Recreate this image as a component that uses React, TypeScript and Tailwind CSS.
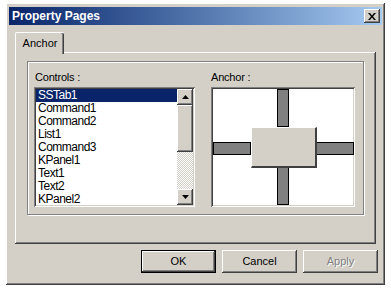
import React from "react";

const raised =
  "shadow-[inset_-1px_-1px_#404040,inset_1px_1px_#ffffff,inset_-2px_-2px_#808080,inset_2px_2px_#d4d0c8]";
const sunken =
  "shadow-[inset_1px_1px_#808080,inset_-1px_-1px_#ffffff,inset_2px_2px_#404040,inset_-2px_-2px_#d4d0c8]";

const items = ["SSTab1", "Command1", "Command2", "List1", "Command3", "KPanel1", "Text1", "Text2", "KPanel2"];

function Btn({ label, def, disabled }: { label: string; def?: boolean; disabled?: boolean }) {
  return (
    <div
      className={`flex h-[23px] w-[75px] items-center justify-center bg-[#d4d0c8] ${
        def
          ? "border border-black shadow-[inset_-1px_-1px_#404040,inset_1px_1px_#ffffff,inset_-2px_-2px_#808080]"
          : raised
      }`}
    >
      <span
        className={
          disabled ? "text-[#808080] [text-shadow:1px_1px_#ffffff]" : "text-black"
        }
      >
        {label}
      </span>
    </div>
  );
}

function ArrowBtn({ up }: { up?: boolean }) {
  return (
    <div className={`flex h-[16px] w-[16px] items-center justify-center bg-[#d4d0c8] ${raised}`}>
      <svg width="7" height="4" viewBox="0 0 7 4">
        <path d={up ? "M3.5 0 L7 4 L0 4 Z" : "M0 0 L7 0 L3.5 4 Z"} fill="#000" />
      </svg>
    </div>
  );
}

export default function App() {
  return (
    <div
      className="h-[289px] w-[391px] bg-white pl-[6px] pt-[3px] text-[11px] leading-[13px] text-black"
      style={{ fontFamily: '"Liberation Sans", Arial, sans-serif' }}
    >
      <div className={`flex h-[282px] w-[379px] flex-col bg-[#d4d0c8] px-[3px] pb-[3px] pt-[4px] ${raised}`}>
        {/* title bar */}
        <div className="flex h-[18px] items-center justify-between bg-gradient-to-r from-[#0a246a] to-[#a6caf0] pl-[3px] pr-[2px]">
          <span className="text-[12px] font-bold text-white">Property Pages</span>
          <div className={`flex h-[14px] w-[16px] items-center justify-center bg-[#d4d0c8] ${raised}`}>
            <svg width="8" height="7" viewBox="0 0 8 7">
              <path d="M0 0 L2 0 L4 2.5 L6 0 L8 0 L5 3.5 L8 7 L6 7 L4 4.5 L2 7 L0 7 L3 3.5 Z" fill="#000" />
            </svg>
          </div>
        </div>

        {/* tab strip */}
        <div className="mt-[7px] flex pl-[6px]">
          <div className="relative z-10 -mb-[2px] flex h-[22px] w-[49px] items-start justify-center rounded-t-[2px] border-l border-t border-white bg-[#d4d0c8] pt-[4px] shadow-[inset_-1px_0_#404040,inset_-2px_0_#808080]">
            Anchor
          </div>
        </div>

        {/* tab panel */}
        <div className={`ml-[6px] flex h-[192px] w-[361px] flex-col px-[12px] pt-[9px] ${raised}`}>
          <div className="h-[154px] border border-[#808080] shadow-[inset_1px_1px_#ffffff,1px_1px_#ffffff]">
            <div className="flex gap-[16px] pl-[6px] pt-[9px]">
              <div className="flex flex-col">
                <span className="pl-[1px] tracking-[-0.2px]">Controls :</span>
                <div className={`mt-[3px] flex h-[120px] w-[161px] bg-white p-[2px] ${sunken}`}>
                  <div className="flex flex-1 flex-col text-[12px] leading-[13px] tracking-[-0.5px]">
                    {items.map((it, i) => (
                      <div
                        key={it}
                        className={`h-[13px] pl-[2px] ${i === 0 ? "bg-[#0a246a] text-white" : ""}`}
                      >
                        {it}
                      </div>
                    ))}
                  </div>
                  <div className="flex w-[16px] flex-col">
                    <ArrowBtn up />
                    <div className={`h-[47px] w-[16px] bg-[#d4d0c8] ${raised}`} />
                    <div className="flex-1 bg-[#ebe9e6] [background-image:repeating-conic-gradient(#ffffff_0_25%,#d4d0c8_0_50%)] [background-size:2px_2px]" />
                    <ArrowBtn />
                  </div>
                </div>
              </div>
              <div className="flex flex-col">
                <span className="tracking-[-0.2px]">Anchor :</span>
                <div className={`mt-[3px] h-[120px] w-[144px] bg-white ${sunken}`}>
                  <div className="relative h-full w-full">
                    <div className="absolute left-[66px] top-[2px] h-[38px] w-[12px] border border-black bg-[#808080]" />
                    <div className="absolute bottom-[2px] left-[66px] h-[38px] w-[12px] border border-black bg-[#808080]" />
                    <div className="absolute left-[2px] top-[55px] h-[13px] w-[38px] border border-black bg-[#808080]" />
                    <div className="absolute right-[1px] top-[55px] h-[13px] w-[38px] border border-black bg-[#808080]" />
                    <div className="absolute left-[40px] top-[40px] h-[41px] w-[66px] border-b-2 border-r-2 border-[#404040] border-l border-t border-l-white border-t-white bg-[#d4d0c8]" />
                  </div>
                </div>
              </div>
            </div>
          </div>
        </div>

        {/* buttons */}
        <div className="mt-[6px] flex justify-end gap-[6px] pr-[4px]">
          <Btn label="OK" def />
          <Btn label="Cancel" />
          <Btn label="Apply" disabled />
        </div>
      </div>
    </div>
  );
}
